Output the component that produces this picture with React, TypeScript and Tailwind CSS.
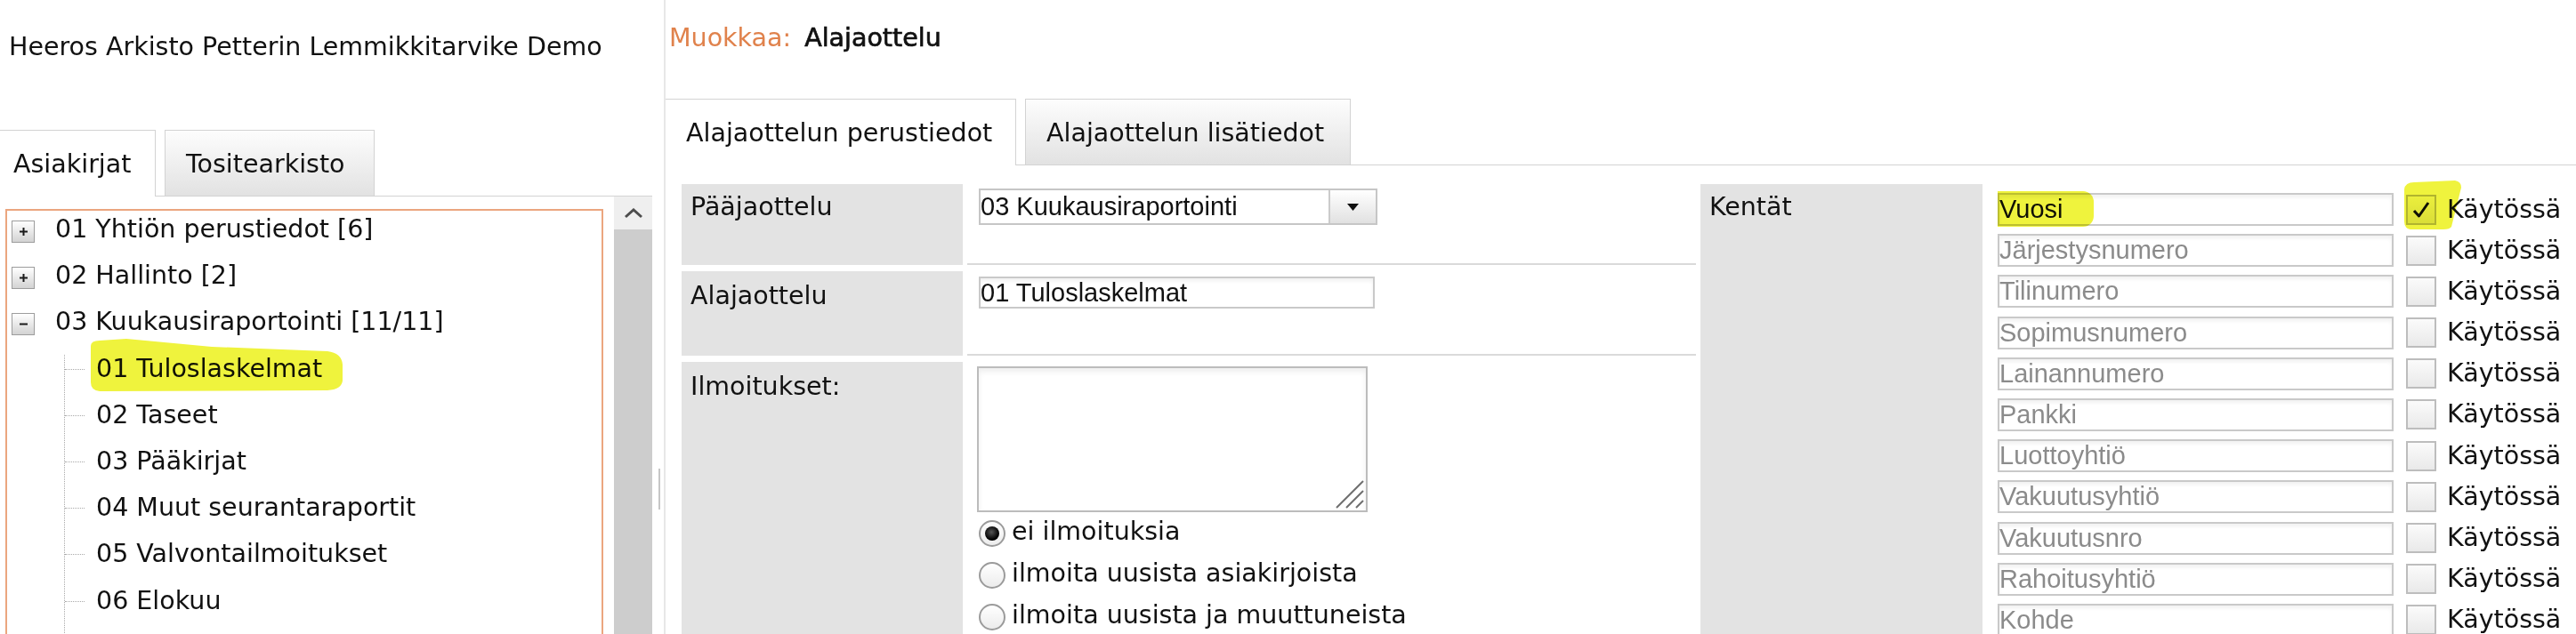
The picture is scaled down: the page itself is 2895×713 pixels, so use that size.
import React from 'react';

type Field = { name: string; value?: string; enabled?: boolean };

const fields: Field[] = [
  { name: 'Vuosi', value: 'Vuosi', enabled: true },
  { name: 'Järjestysnumero' },
  { name: 'Tilinumero' },
  { name: 'Sopimusnumero' },
  { name: 'Lainannumero' },
  { name: 'Pankki' },
  { name: 'Luottoyhtiö' },
  { name: 'Vakuutusyhtiö' },
  { name: 'Vakuutusnro' },
  { name: 'Rahoitusyhtiö' },
  { name: 'Kohde' },
];

const sections = [
  { label: '01 Yhtiön perustiedot [6]', open: false },
  { label: '02 Hallinto [2]', open: false },
  { label: '03 Kuukausiraportointi [11/11]', open: true },
];

const monthly = [
  '01 Tuloslaskelmat',
  '02 Taseet',
  '03 Pääkirjat',
  '04 Muut seurantaraportit',
  '05 Valvontailmoitukset',
  '06 Elokuu',
];

const notifyOptions = ['ei ilmoituksia', 'ilmoita uusista asiakirjoista', 'ilmoita uusista ja muuttuneista'];

const TreeToggle: React.FC<{ open: boolean }> = ({ open }) => (
  <span className="mt-[6px] flex h-[25px] w-[26px] shrink-0 items-center justify-center border border-[#9d9d9d] bg-linear-to-b from-white to-[#d3d3d3]">
    <svg width="9" height="9" viewBox="0 0 9 9">
      <path d="M0 4.5h9" stroke="#1a1a1a" strokeWidth="2" />
      {!open && <path d="M4.5 0v9" stroke="#1a1a1a" strokeWidth="2" />}
    </svg>
  </span>
);

const ArchiveSidebar: React.FC = () => (
  <aside className="flex w-[733px] shrink-0 flex-col">
    <div className="h-[146px] shrink-0 whitespace-nowrap pl-[10px] pt-[37px]">
      Heeros Arkisto Petterin Lemmikkitarvike Demo
    </div>

    <div className="flex h-[75px] shrink-0 border-b border-[#d3d3d3]">
      <div className="-mb-px h-[75px] w-[175px] border-r border-t border-[#d3d3d3] bg-white pl-[15px] pt-[22px]">
        Asiakirjat
      </div>
      <div className="-mb-px ml-[10px] h-[75px] w-[236px] border border-[#d3d3d3] bg-linear-to-b from-[#fdfdfd] to-[#e2e2e2] pl-[23px] pt-[22px]">
        Tositearkisto
      </div>
    </div>

    <div className="flex min-h-0 flex-1">
      <div className="w-[690px] pl-[6px] pt-[14px]">
        <div className="h-full w-[672px] border-2 border-b-0 border-[#eba67f] pt-[5px]">
          <ul className="flex flex-col gap-[20.2px] whitespace-nowrap">
            {sections.map((s) => (
              <li key={s.label} className="flex h-[32px] items-start pl-[5px]">
                <TreeToggle open={s.open} />
                <span className="ml-[23px]">{s.label}</span>
              </li>
            ))}
            <li className="ml-[64px] border-l border-dotted border-[#a8a8a8] pb-[40px]">
              <ul className="flex flex-col gap-[20.2px]">
                {monthly.map((label, i) => (
                  <li key={label} className="flex h-[32px] items-start">
                    <span className="mt-[16px] w-[22px] border-t border-dotted border-[#a8a8a8]" />
                    <span className="relative ml-[13px]">
                      {label}
                      {i === 0 && (
                        <svg
                          className="pointer-events-none absolute left-[-10px] top-[-19px] mix-blend-multiply"
                          width="292"
                          height="62"
                          viewBox="0 0 292 62"
                        >
                          <path
                            d="M4 9 Q4 3 14 3 L44 1 L140 10 L270 15 Q286 17 287 30 L287 48 Q286 58 270 59 L14 60 Q4 59 4 50 Z"
                            fill="#eff33d"
                          />
                        </svg>
                      )}
                    </span>
                  </li>
                ))}
              </ul>
            </li>
          </ul>
        </div>
      </div>

      {/* scrollbar of the tree tab */}
      <div className="flex w-[43px] flex-col">
        <div className="flex h-[37px] items-center justify-center bg-[#efefef]">
          <svg width="22" height="12" viewBox="0 0 22 12">
            <path d="M2 10 L11 2 L20 10" fill="none" stroke="#4d4d4d" strokeWidth="3" />
          </svg>
        </div>
        <div className="flex-1 bg-[#cdcdcd]" />
      </div>
    </div>
  </aside>
);

const Checkbox: React.FC<{ checked?: boolean }> = ({ checked }) => (
  <span className="ml-[14px] flex h-[34px] w-[34px] shrink-0 items-center justify-center border-2 border-[#bdbdbd] bg-linear-to-b from-[#fbfbfb] to-[#e9e9e9]">
    {checked && (
      <svg width="22" height="22" viewBox="0 0 22 22">
        <path d="M3 12 L8.5 18 L19 3" fill="none" stroke="#111" strokeWidth="3" strokeLinejoin="round" />
      </svg>
    )}
  </span>
);

const Radio: React.FC<{ checked?: boolean }> = ({ checked }) => (
  <span className="mt-[3px] flex h-[30px] w-[30px] shrink-0 items-center justify-center rounded-full border-2 border-[#9b9b9b] bg-linear-to-b from-white to-[#ececec]">
    {checked && (
      <span className="h-[16px] w-[16px] rounded-full bg-[radial-gradient(circle_at_45%_40%,#555,#000_65%)]" />
    )}
  </span>
);

const EditPanel: React.FC = () => (
  <main className="flex min-w-0 flex-1 flex-col border-l-2 border-[#e7e7e7]">
    <h1 className="h-[111px] shrink-0 whitespace-nowrap pl-[4px] pt-[27px] font-normal">
      <span className="text-[#e0824c]">Muokkaa:</span>
      <span className="ml-[15px] [-webkit-text-stroke:0.7px_#111]">Alajaottelu</span>
    </h1>

    <div className="flex h-[75px] shrink-0 border-b border-[#d3d3d3]">
      <div className="-mb-px h-[75px] w-[394px] border-r border-t border-[#d3d3d3] bg-white pl-[23px] pt-[22px]">
        Alajaottelun perustiedot
      </div>
      <div className="-mb-px ml-[10px] h-[75px] w-[366px] border border-[#d3d3d3] bg-linear-to-b from-[#fdfdfd] to-[#e2e2e2] pl-[23px] pt-[22px]">
        Alajaottelun lisätiedot
      </div>
    </div>

    <div className="ml-[18px] mt-[21px] grid grid-cols-[316px_819px_317px_1fr] grid-rows-[91px_95px_420px] gap-x-[5px] gap-y-[7px]">
      <div className="col-start-1 row-start-1 bg-[#e3e3e3] pl-[10px] pt-[10px]">Pääjaottelu</div>
      <div className="col-start-2 row-start-1 border-b-2 border-[#dadada] pl-[13px] pt-[5px]">
        <div className="flex h-[41px] w-[448px] border-2 border-[#c6c6c6] bg-white font-['Liberation_Sans',Arial,sans-serif] text-[29px]">
          <span className="flex-1 leading-[37px]">03 Kuukausiraportointi</span>
          <span className="flex w-[53px] items-center justify-center border-l-2 border-[#cbcbcb] bg-linear-to-b from-white to-[#e1e1e1]">
            <svg width="13" height="8" viewBox="0 0 13 8">
              <path d="M0 0 H13 L6.5 8 Z" fill="#111" />
            </svg>
          </span>
        </div>
      </div>

      <div className="col-start-1 row-start-2 bg-[#e3e3e3] pl-[10px] pt-[12px]">Alajaottelu</div>
      <div className="col-start-2 row-start-2 border-b-2 border-[#dadada] pl-[13px] pt-[6px]">
        <input
          readOnly
          defaultValue="01 Tuloslaskelmat"
          className="block h-[36px] w-[445px] border-2 border-[#c9c9c9] bg-white px-0 font-['Liberation_Sans',Arial,sans-serif] text-[29px] text-[#111] shadow-[inset_0_3px_4px_rgba(0,0,0,0.06)] outline-none"
        />
      </div>

      <div className="col-start-1 row-start-3 bg-[#e3e3e3] pl-[10px] pt-[12px]">Ilmoitukset:</div>
      <div className="col-start-2 row-start-3 pl-[11px] pt-[5px]">
        <div className="relative h-[164px] w-[439px]">
          <textarea
            readOnly
            className="block h-full w-full resize-none border-2 border-[#bcbcbc] bg-white shadow-[inset_0_4px_6px_rgba(0,0,0,0.07)] outline-none"
          />
          <svg className="absolute bottom-[4px] right-[4px]" width="34" height="34" viewBox="0 0 34 34">
            <path d="M33 3 L3 33 M33 14 L14 33 M33 25 L25 33" stroke="#6f6f6f" strokeWidth="2" />
          </svg>
        </div>
        <div className="ml-[2px] mt-[6px] flex flex-col gap-[15px] whitespace-nowrap">
          {notifyOptions.map((label, i) => (
            <label key={label} className="flex h-[32px] items-start">
              <Radio checked={i === 0} />
              <span className="ml-[7px]">{label}</span>
            </label>
          ))}
        </div>
      </div>

      <div className="col-start-3 row-span-3 row-start-1 bg-[#e3e3e3] pl-[10px] pt-[10px]">Kentät</div>
      <div className="col-start-4 row-span-3 row-start-1 flex flex-col gap-[9.2px] pl-[12px] pt-[10px]">
        {fields.map((f, i) => (
          <div key={f.name} className="relative flex h-[37px] items-center whitespace-nowrap">
            <input
              readOnly
              defaultValue={f.value}
              placeholder={f.name}
              className="h-[37px] w-[445px] shrink-0 border-2 border-[#c9c9c9] bg-white px-0 font-['Liberation_Sans',Arial,sans-serif] text-[29px] text-[#111] shadow-[inset_0_3px_4px_rgba(0,0,0,0.06)] outline-none placeholder:text-[#8b8b8b]"
            />
            <Checkbox checked={f.enabled} />
            <span className="ml-[12px]">Käytössä</span>
            {i === 0 && (
              <>
                <span className="pointer-events-none absolute left-0 top-[-2px] h-[40px] w-[108px] rounded-r-[12px] bg-[#eff33d] mix-blend-multiply" />
                <svg
                  className="pointer-events-none absolute left-[456px] top-[-14px] mix-blend-multiply"
                  width="66"
                  height="56"
                  viewBox="0 0 66 56"
                >
                  <path
                    d="M1 10 Q2 2 12 2 L58 0 Q65 1 65 8 L54 52 Q52 55 45 55 L8 55 Q1 54 1 46 Z"
                    fill="#eff33d"
                  />
                </svg>
              </>
            )}
          </div>
        ))}
      </div>
    </div>
  </main>
);

export default function App() {
  return (
    <div className="flex h-[713px] w-[2895px] overflow-hidden bg-white font-['DejaVu_Sans',Verdana,sans-serif] text-[28.5px] leading-[32px] text-[#111]">
      <ArchiveSidebar />
      {/* splitter between the panels */}
      <div className="w-[13px] shrink-0 pl-[7px] pt-[527px]">
        <div className="h-[46px] w-[2px] bg-[#c6c6c6]" />
      </div>
      <EditPanel />
    </div>
  );
}
